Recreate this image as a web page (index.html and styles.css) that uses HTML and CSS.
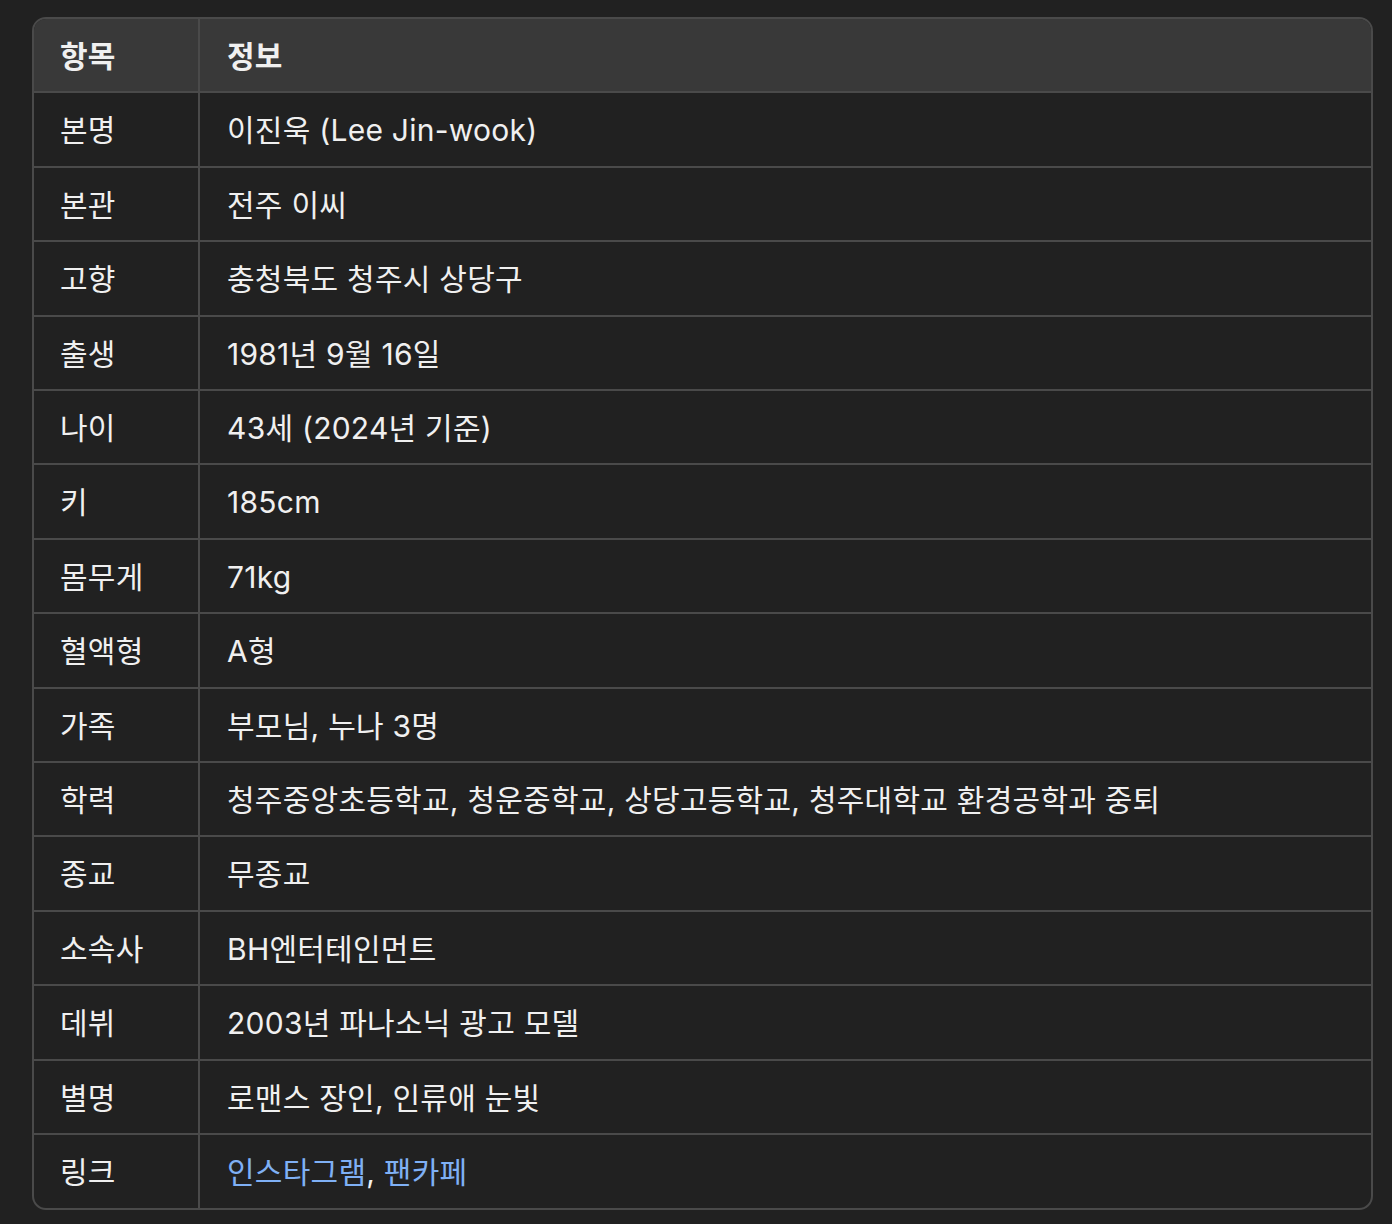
FILE: index.html
```html
<!DOCTYPE html>
<html lang="ko">
<head>
<meta charset="utf-8">
<link rel="stylesheet" href="styles.css">
</head>
<body>
<div class="table-wrap">
<table class="info">
<thead>
<tr><th class="key">항목</th><th class="val">정보</th></tr>
</thead>
<tbody>
<tr><td class="key">본명</td><td class="val">이진욱 (Lee Jin-wook)</td></tr>
<tr><td class="key">본관</td><td class="val">전주 이씨</td></tr>
<tr><td class="key">고향</td><td class="val">충청북도 청주시 상당구</td></tr>
<tr><td class="key">출생</td><td class="val">1981년 9월 16일</td></tr>
<tr><td class="key">나이</td><td class="val">43세 (2024년 기준)</td></tr>
<tr><td class="key">키</td><td class="val">185cm</td></tr>
<tr><td class="key">몸무게</td><td class="val">71kg</td></tr>
<tr><td class="key">혈액형</td><td class="val">A형</td></tr>
<tr><td class="key">가족</td><td class="val">부모님, 누나 3명</td></tr>
<tr><td class="key">학력</td><td class="val">청주중앙초등학교, 청운중학교, 상당고등학교, 청주대학교 환경공학과 중퇴</td></tr>
<tr><td class="key">종교</td><td class="val">무종교</td></tr>
<tr><td class="key">소속사</td><td class="val">BH엔터테인먼트</td></tr>
<tr><td class="key">데뷔</td><td class="val">2003년 파나소닉 광고 모델</td></tr>
<tr><td class="key">별명</td><td class="val">로맨스 장인, 인류애 눈빛</td></tr>
<tr><td class="key">링크</td><td class="val"><a href="#">인스타그램</a>, <a href="#">팬카페</a></td></tr>
</tbody>
</table>
</div>
</body>
</html>
```
FILE: styles.css
```css
html, body {
  margin: 0;
  background: #212121;
}
body {
  padding: 17px 19px 0 32px;
  font-family: Inter, "Noto Sans CJK KR", sans-serif;
  color: #f0f0f0;
}
.table-wrap {
  border: 2px solid #4a4a4a;
  border-radius: 14px;
  overflow: hidden;
  width: 1337px;
}
.info {
  width: 100%;
  border-collapse: separate;
  border-spacing: 0;
  font-size: 30px;
  letter-spacing: 0.25px;
}
.info th, .info td {
  text-align: left;
  padding: 16px 26px 14px;
  line-height: 42.4px;
  border-bottom: 2px solid #4a4a4a;
  vertical-align: middle;
}
.info .val {
  padding-left: 27px;
}
.info tbody tr:last-child td {
  border-bottom: none;
}
.info thead th {
  background: #393939;
  font-weight: 600;
}
.info .key {
  width: 112px;
  border-right: 2px solid #4a4a4a;
}
.info a {
  color: #7fb0f5;
  text-decoration: none;
}
```
